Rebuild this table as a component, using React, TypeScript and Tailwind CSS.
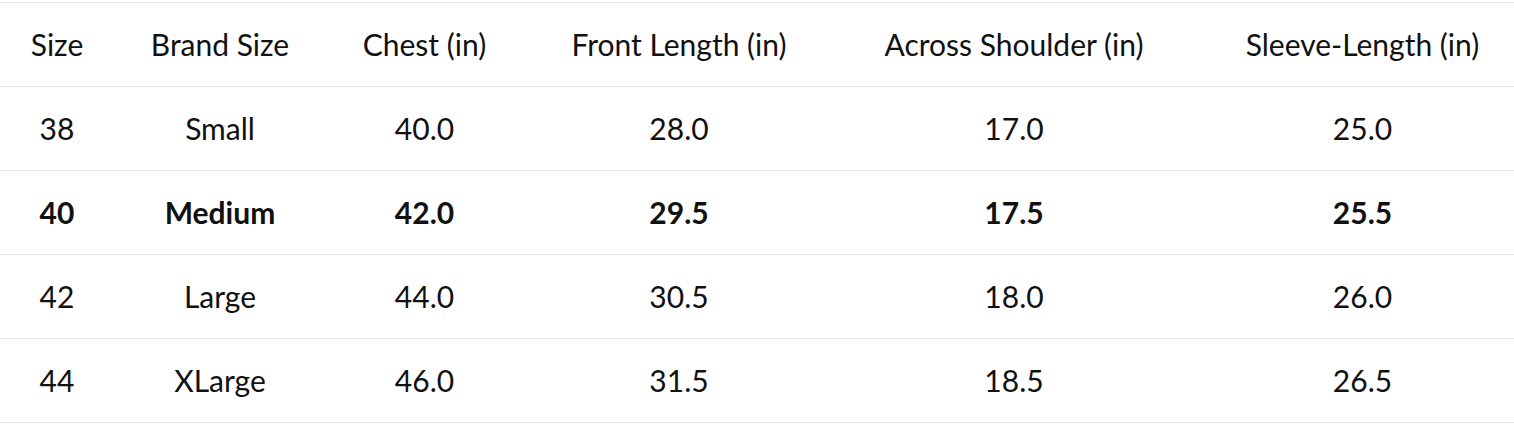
import React from "react";

const headers = ["Size", "Brand Size", "Chest (in)", "Front Length (in)", "Across Shoulder (in)", "Sleeve-Length (in)"];

const rows = [
  { cells: ["38", "Small", "40.0", "28.0", "17.0", "25.0"], bold: false },
  { cells: ["40", "Medium", "42.0", "29.5", "17.5", "25.5"], bold: true },
  { cells: ["42", "Large", "44.0", "30.5", "18.0", "26.0"], bold: false },
  { cells: ["44", "XLarge", "46.0", "31.5", "18.5", "26.5"], bold: false },
];

const rowGrid = "grid grid-cols-[114px_212px_197px_312px_358px_339px] items-center text-center border-b border-[#e8e8e8]";

const SizeChart = () => {
  return (
    <div className="w-[1532px] mt-[2px] font-['Lato',sans-serif] text-[30px] text-[#111111]">
      <div className={`${rowGrid} h-[85px] border-t`}>
        {headers.map((h) => (
          <div key={h} className="whitespace-nowrap">
            {h}
          </div>
        ))}
      </div>
      {rows.map((row) => (
        <div key={row.cells[0]} className={`${rowGrid} h-[84px] ${row.bold ? "font-bold" : "font-normal"}`}>
          {row.cells.map((c, i) => (
            <div key={i}>{c}</div>
          ))}
        </div>
      ))}
    </div>
  );
};

export default function App() {
  return (
    <div className="w-full h-[434px] overflow-hidden bg-white">
      <SizeChart />
    </div>
  );
}
